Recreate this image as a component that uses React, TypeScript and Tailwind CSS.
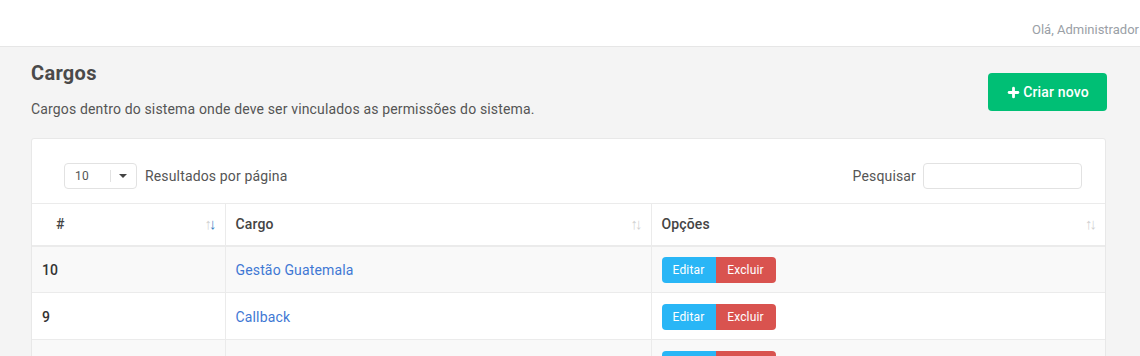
import { Plus } from 'lucide-react';

const rows = [
  { id: 10, name: 'Gestão Guatemala' },
  { id: 9, name: 'Callback' },
  { id: 8, name: 'Suporte' },
];

function SortIcon({ active = false }: { active?: boolean }) {
  return (
    <span className="flex items-center text-[15px] leading-none tracking-[-3px] pr-[3px]">
      <span className="text-[#d2d2d2]">↑</span>
      <span className={active ? 'text-[#3b82c4]' : 'text-[#d2d2d2]'}>↓</span>
    </span>
  );
}

export default function App() {
  return (
    <div className="min-h-[356px] bg-[#f4f4f4] font-['Roboto',sans-serif] tracking-[0.15px] text-[#444]">
      {/* Top bar */}
      <header className="h-[47px] bg-white border-b border-[#e6e6e6] flex justify-end items-start pt-[22px]">
        <span className="text-[13px] leading-[16px] tracking-normal text-[#9aa0a6] whitespace-nowrap pr-px">Olá, Administrador</span>
      </header>

      <main className="pl-[31px] pr-[33px] pt-[12px]">
        <div className="flex justify-between items-start">
          <div>
            <h1 className="text-[20px] leading-[28px] font-bold tracking-[0.3px] text-[#4a4a4a]">Cargos</h1>
            <p className="mt-[12px] text-[14px] leading-[20px] text-[#555]">
              Cargos dentro do sistema onde deve ser vinculados as permissões do sistema.
            </p>
          </div>
          <button className="mt-[14px] h-[38px] w-[119px] rounded-[4px] bg-[#00bf75] text-white text-[14px] font-medium flex items-center justify-center gap-[2px]">
            <Plus size={15} strokeWidth={4.5} />
            Criar novo
          </button>
        </div>

        {/* Card */}
        <div className="mt-[19px] mr-[1px] bg-white border border-[#e8e8e8] rounded-t-[3px]">
          <div className="flex justify-between items-center pt-[24px] pb-[14px] pl-[32px] pr-[23px]">
            <div className="flex items-center gap-[8px]">
              <div className="w-[73px] h-[26px] border border-[#e2e2e2] rounded-[4px] flex items-center pl-[10px]">
                <span className="text-[12px] text-[#555] w-[35px]">10</span>
                <span className="h-[12px] w-px bg-[#e2e2e2]" />
                <span className="ml-[8px] w-0 h-0 border-l-[4px] border-r-[4px] border-t-[4px] border-l-transparent border-r-transparent border-t-[#444]" />
              </div>
              <span className="text-[14px] text-[#555]">Resultados por página</span>
            </div>
            <div className="flex items-center gap-[7px]">
              <span className="text-[14px] text-[#555]">Pesquisar</span>
              <input className="w-[159px] h-[26px] border border-[#e2e2e2] rounded-[4px] outline-none" />
            </div>
          </div>

          <table className="w-full border-collapse text-[14px]">
            <thead>
              <tr className="border-t border-[#ebebeb] border-b-2 border-b-[#ebebeb]">
                <th className="w-[193px] h-[42px] text-left font-medium pl-[24px] pr-[8px] border-r border-[#ebebeb]">
                  <div className="flex justify-between items-center">
                    <span>#</span>
                    <SortIcon active />
                  </div>
                </th>
                <th className="w-[426px] text-left font-medium pl-[10px] pr-[8px] border-r border-[#ebebeb]">
                  <div className="flex justify-between items-center">
                    <span>Cargo</span>
                    <SortIcon />
                  </div>
                </th>
                <th className="text-left font-medium pl-[10px] pr-[8px]">
                  <div className="flex justify-between items-center">
                    <span>Opções</span>
                    <SortIcon />
                  </div>
                </th>
              </tr>
            </thead>
            <tbody>
              {rows.map((r, i) => (
                <tr key={r.id} className={`border-b border-[#ebebeb] ${i % 2 === 0 ? 'bg-[#f9f9f9]' : 'bg-white'}`}>
                  <td className="h-[47px] pl-[10px] pt-[2px] font-medium text-[#333] border-r border-[#ebebeb]">{r.id}</td>
                  <td className="pl-[10px] pt-[2px] text-[#3f78d4] border-r border-[#ebebeb]">{r.name}</td>
                  <td className="pl-[10px] pt-[2px]">
                    <div className="flex text-[12px] text-white">
                      <button className="h-[26px] w-[54px] bg-[#29b6f6] rounded-l-[4px]">Editar</button>
                      <button className="h-[26px] w-[60px] bg-[#d9534f] rounded-r-[4px]">Excluir</button>
                    </div>
                  </td>
                </tr>
              ))}
            </tbody>
          </table>
        </div>
      </main>
    </div>
  );
}
